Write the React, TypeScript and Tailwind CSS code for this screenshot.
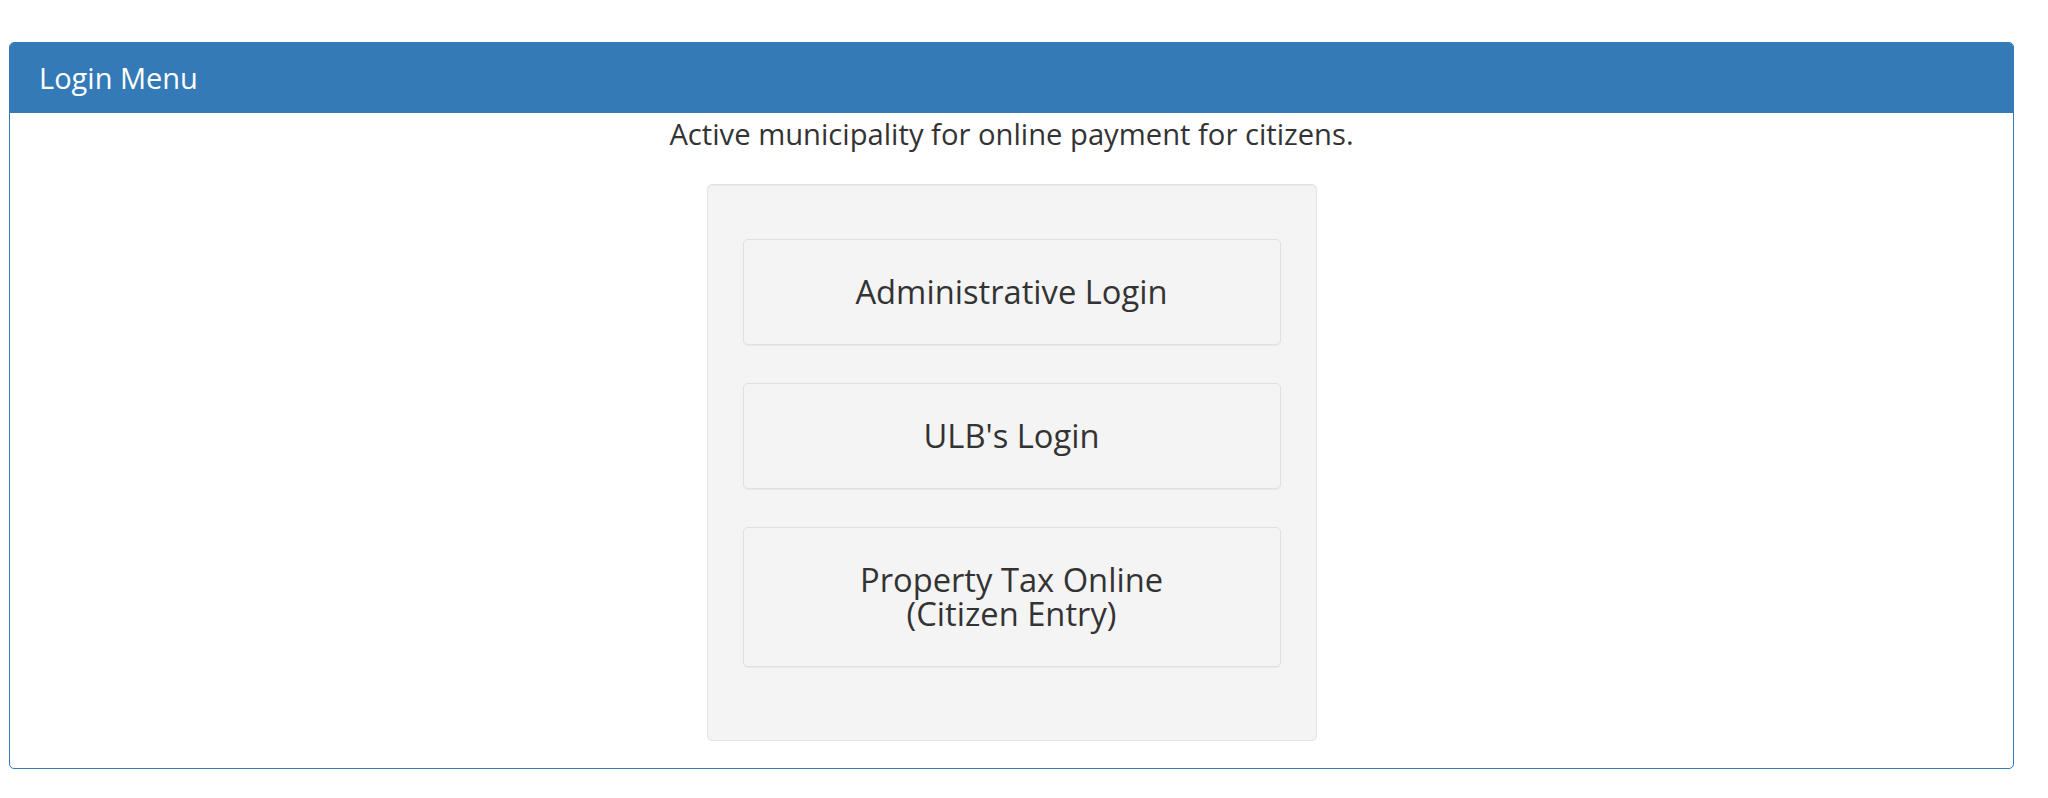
const buttons = ['Administrative Login', "ULB's Login", 'Property Tax Online\n(Citizen Entry)'];

export default function App() {
  return (
    <div className="h-[798px] bg-white pl-[9px] pt-[42px] font-['Open_Sans',sans-serif] text-[#333]">
      <div className="w-[2005px] overflow-hidden rounded-[5px] border border-[#337ab7] bg-white">
        <div className="flex h-[70px] items-center bg-[#337ab7] px-[29px] text-[29px] text-white">
          Login Menu
        </div>
        <div className="pb-[27px] pt-px text-center">
          <p className="text-[29.2px] leading-[41px]">Active municipality for online payment for citizens.</p>
          <div className="mx-auto mt-[29px] flex w-[610px] flex-col gap-[38px] rounded-[5px] border border-[#e3e3e3] bg-[#f4f4f4] px-[35px] pb-[73px] pt-[54px] shadow-[inset_0_1px_1px_rgba(0,0,0,0.05)]">
            {buttons.map((label) => (
              <button
                key={label}
                className="whitespace-pre-line rounded-[5px] border border-[#e0e0e0] bg-[#f4f4f4] py-[35px] text-[32.7px] leading-[34px] text-[#333] shadow-[0_1px_1px_rgba(0,0,0,0.04)]"
              >
                {label}
              </button>
            ))}
          </div>
        </div>
      </div>
    </div>
  );
}
